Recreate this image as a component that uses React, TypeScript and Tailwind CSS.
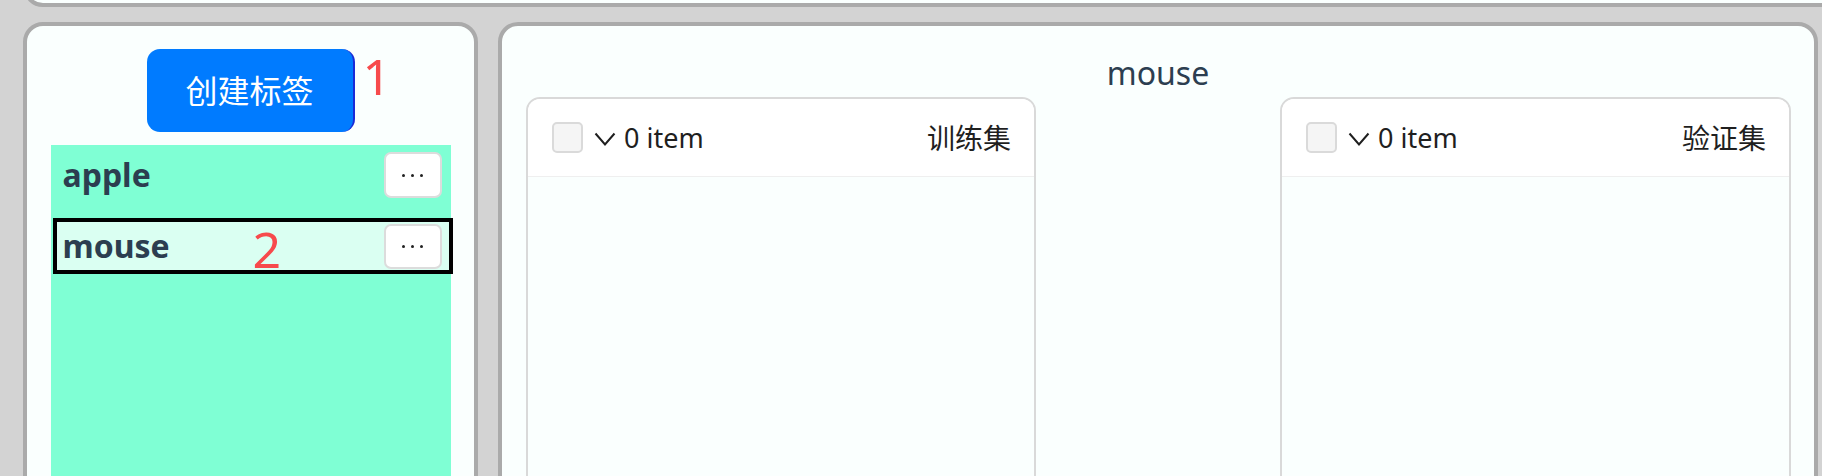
import React from "react";

const FONT = `"Noto Sans", "Open Sans", "Noto Sans CJK SC", sans-serif`;

function Dots() {
  return (
    <div className="flex items-center gap-[6px]">
      <span className="block w-[3px] h-[3px] rounded-full bg-[#222]" />
      <span className="block w-[3px] h-[3px] rounded-full bg-[#222]" />
      <span className="block w-[3px] h-[3px] rounded-full bg-[#222]" />
    </div>
  );
}

function MoreButton({ h }: { h: string }) {
  return (
    <button
      className={`w-[58px] ${h} flex items-center justify-center bg-white border-2 border-[#dcdcdc] rounded-[7px]`}
    >
      <Dots />
    </button>
  );
}

function TransferCard({ title, width }: { title: string; width: string }) {
  return (
    <div className={`${width} h-[500px] border-2 border-[#d9d9d9] rounded-[14px] overflow-hidden`}>
      <div className="h-[78px] bg-white border-b border-[#efefef] flex items-center pl-[24px] pr-[23px]">
        <span className="block w-[31px] h-[31px] rounded-[5px] border-2 border-[#dadada] bg-[#f5f5f5]" />
        <svg className="ml-[11px] mt-[3px]" width="22" height="15" viewBox="0 0 22 15">
          <polyline points="1.5,1.5 11,12.5 20.5,1.5" fill="none" stroke="#1f1f1f" strokeWidth="2" />
        </svg>
        <span className="ml-[8px] text-[27px] leading-none text-[#1f1f1f]">0 item</span>
        <span className="ml-auto text-[28px] leading-none text-[#1f1f1f]">{title}</span>
      </div>
    </div>
  );
}

export default function App() {
  return (
    <div
      className="w-[1822px] h-[476px] overflow-hidden bg-[#d3d3d3]"
      style={{ fontFamily: FONT }}
    >
      {/* top panel (scrolled, only bottom visible) */}
      <div className="ml-[23px] -mr-[30px] h-[60px] -mt-[53px] border-4 border-[#aaaaaa] rounded-[20px] bg-[#fafffe]" />

      <div className="flex gap-[20px] pl-[23px] mt-[15px]">
        {/* left panel */}
        <div className="w-[455px] h-[600px] shrink-0 border-4 border-[#aaaaaa] rounded-t-[20px] bg-[#fafffe]">
          <div className="pt-[23px] flex justify-center">
            <div className="relative">
              <button className="w-[208px] h-[83px] rounded-[13px] bg-[#007bff] border-r-2 border-[#1a2bd6] text-white text-[32px] leading-none flex items-center justify-center">
                创建标签
              </button>
              <span className="absolute left-[216px] top-[2px] text-[50px] leading-none text-[#f74a4c]">1</span>
            </div>
          </div>
          <div className="mt-[13px] mx-auto w-[400px] h-[400px] bg-[#7fffd4]">
            <div className="h-[60px] flex items-center pl-[12px] pr-[9px]">
              <span className="text-[32px] leading-none font-bold text-[#2c3e50]">apple</span>
              <div className="ml-auto">
                <MoreButton h="h-[46px]" />
              </div>
            </div>
            <div className="relative mt-[13px] ml-[2px] w-[400px] h-[56px] border-4 border-black bg-[#dafff2] flex items-center pl-[6px] pr-[7px]">
              <span className="text-[32px] leading-none font-bold text-[#2c3e50]">mouse</span>
              <span className="absolute left-[196px] top-[2px] text-[50px] leading-none text-[#f74a4c]">2</span>
              <div className="ml-auto">
                <MoreButton h="h-[45px]" />
              </div>
            </div>
          </div>
        </div>

        {/* right panel */}
        <div className="w-[1320px] h-[600px] shrink-0 border-4 border-[#aaaaaa] rounded-t-[20px] bg-[#fafffe]">
          <div className="pt-[31px] h-[32px] box-content text-center text-[32px] leading-[32px] text-[#2c3e50]">
            mouse
          </div>
          <div className="mt-[8px] flex justify-between pl-[24px] pr-[23px]">
            <TransferCard title="训练集" width="w-[510px]" />
            <TransferCard title="验证集" width="w-[511px]" />
          </div>
        </div>
      </div>
    </div>
  );
}
